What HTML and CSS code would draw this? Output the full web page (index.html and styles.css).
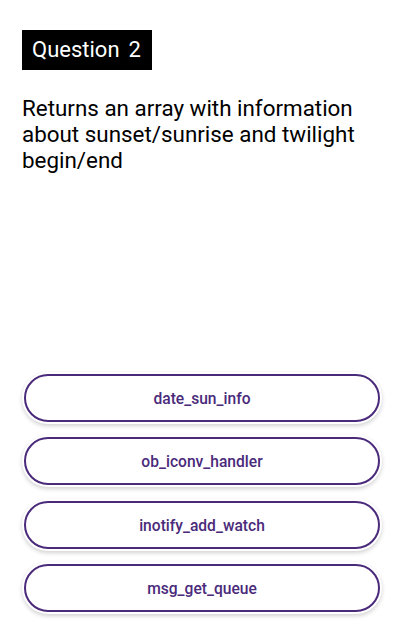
FILE: index.html
```html
<!DOCTYPE html>
<html>
<head>
<meta charset="utf-8">
<link rel="stylesheet" href="styles.css">
</head>
<body>
<div class="screen">
  <div class="badge">Question 2</div>
  <p class="question">Returns an array with information about sunset/sunrise and twilight begin/end</p>
  <div class="answers">
    <button class="answer">date_sun_info</button>
    <button class="answer">ob_iconv_handler</button>
    <button class="answer">inotify_add_watch</button>
    <button class="answer">msg_get_queue</button>
  </div>
</div>
</body>
</html>
```
FILE: styles.css
```css
html, body {
  margin: 0;
  padding: 0;
  background: #fff;
}
.screen {
  box-sizing: border-box;
  height: 630px;
  display: flex;
  flex-direction: column;
  align-items: flex-start;
  padding: 30px 23px 18px 22px;
  font-family: Roboto, "Liberation Sans", sans-serif;
}
.badge {
  background: #000;
  color: #fff;
  font-size: 22px;
  word-spacing: 3.5px;
  height: 40px;
  line-height: 40px;
  padding: 0 11px 0 10px;
  box-sizing: border-box;
  white-space: nowrap;
}
.question {
  margin: 25px 0 0 0;
  font-size: 22.4px;
  line-height: 26px;
  color: #000;
  width: 356px;
}
.answers {
  margin-top: auto;
  align-self: stretch;
  display: flex;
  flex-direction: column;
  gap: 15.3px;
  padding-left: 2px;
}
.answer {
  height: 48px;
  border: 2px solid #4a2a7a;
  border-radius: 24px;
  background: #fff;
  color: #4a2a7a;
  font-family: Roboto, "Liberation Sans", sans-serif;
  font-weight: 500;
  font-size: 15.6px;
  padding: 2px 0 0 0;
  box-shadow: 0 0 0 2px #fff, 0 2px 4px 2px rgba(0, 0, 0, 0.18);
}
```
